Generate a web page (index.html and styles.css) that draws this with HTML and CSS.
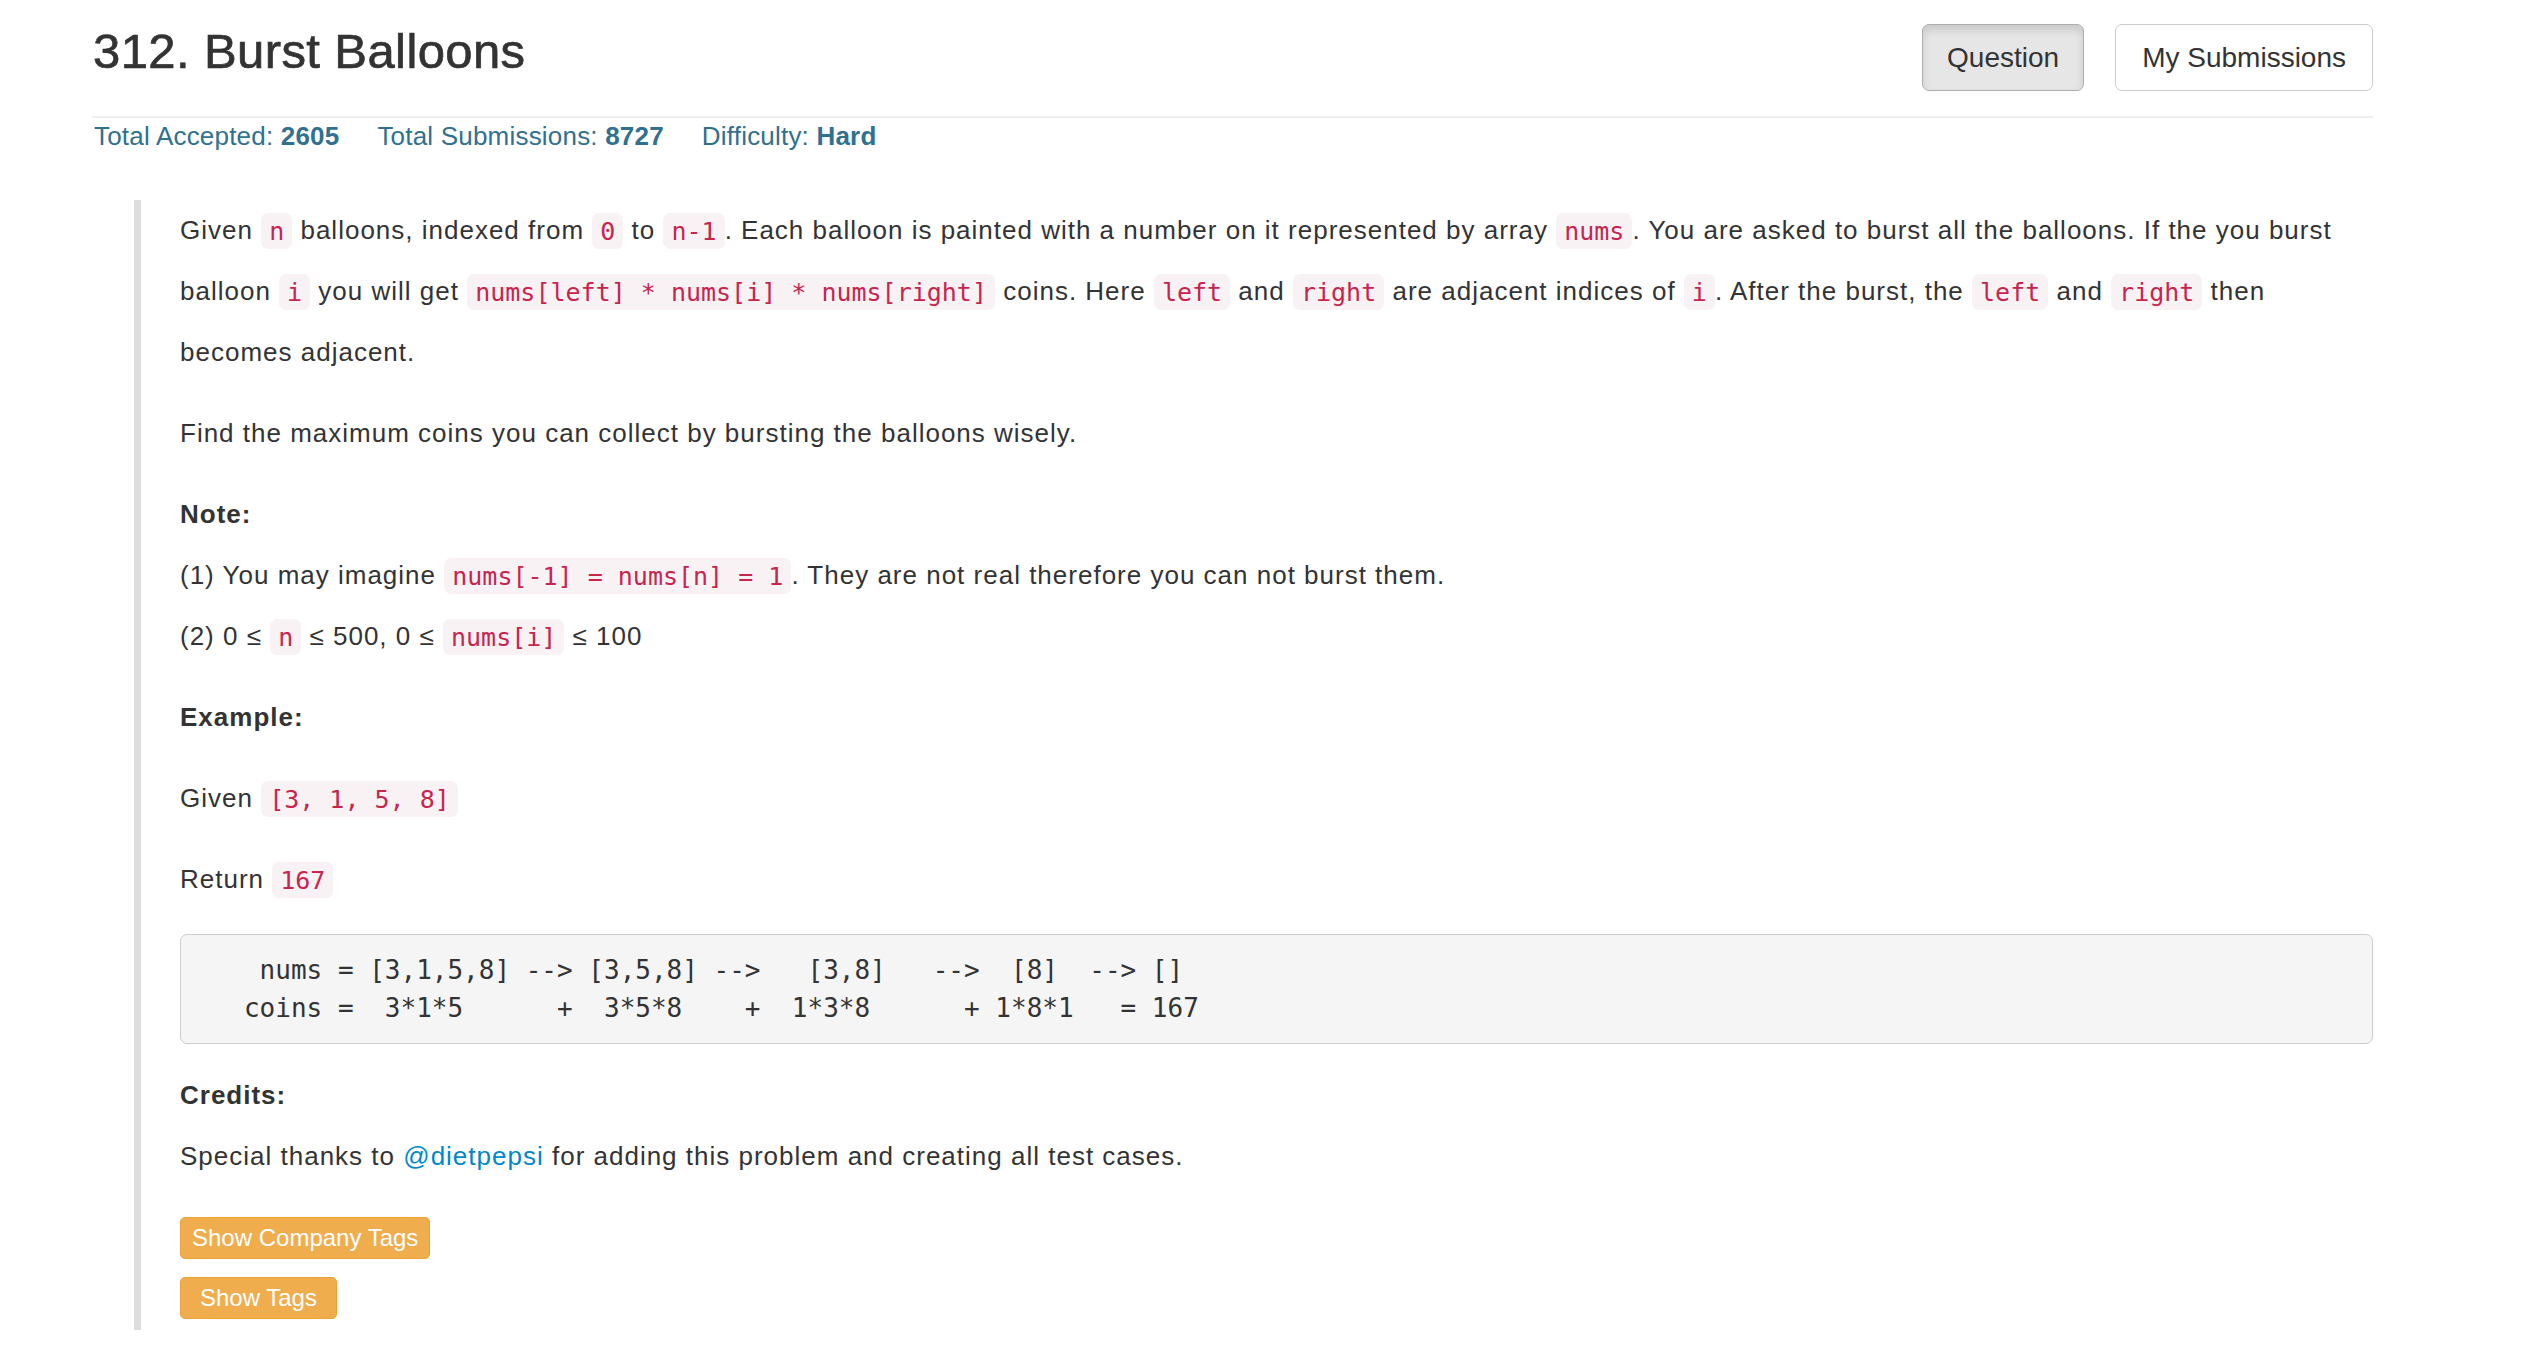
FILE: index.html
```
<!DOCTYPE html>
<html lang="en">
<head>
<meta charset="utf-8">
<title>312. Burst Balloons</title>
<link rel="stylesheet" href="styles.css">
</head>
<body>
<div class="page">
  <header class="head">
    <h3 class="title">312. Burst Balloons</h3>
    <nav class="tabs">
      <a class="tab tab-active" href="#">Question</a>
      <a class="tab" href="#">My Submissions</a>
    </nav>
  </header>
  <div class="stats">
    <span class="stat">Total Accepted: <b>2605</b></span>
    <span class="stat">Total Submissions: <b>8727</b></span>
    <span class="stat">Difficulty: <b>Hard</b></span>
  </div>
  <blockquote class="question">
    <p>Given <code>n</code> balloons, indexed from <code>0</code> to <code>n-1</code>. Each balloon is painted with a number on it represented by array <code>nums</code>. You are asked to burst all the balloons. If the you burst balloon <code>i</code> you will get <code>nums[left] * nums[i] * nums[right]</code> coins. Here <code>left</code> and <code>right</code> are adjacent indices of <code>i</code>. After the burst, the <code>left</code> and <code>right</code> then becomes adjacent.</p>
    <p>Find the maximum coins you can collect by bursting the balloons wisely.</p>
    <p><b>Note:</b><br>(1) You may imagine <code>nums[-1] = nums[n] = 1</code>. They are not real therefore you can not burst them.<br>(2) 0 ≤ <code>n</code> ≤ 500, 0 ≤ <code>nums[i]</code> ≤ 100</p>
    <p><b>Example:</b></p>
    <p>Given <code>[3, 1, 5, 8]</code></p>
    <p>Return <code>167</code></p>
    <pre class="example">    nums = [3,1,5,8] --&gt; [3,5,8] --&gt;   [3,8]   --&gt;  [8]  --&gt; []
   coins =  3*1*5      +  3*5*8    +  1*3*8      + 1*8*1   = 167</pre>
    <p><b>Credits:</b><br>Special thanks to <a class="user" href="#">@dietpepsi</a> for adding this problem and creating all test cases.</p>
    <div class="tag-buttons">
      <button class="btn-tag" type="button">Show Company Tags</button>
      <button class="btn-tag btn-tag-wide" type="button">Show Tags</button>
    </div>
  </blockquote>
</div>
</body>
</html>
```
FILE: styles.css
```
html, body {
  margin: 0;
  padding: 0;
  background: #fff;
}

body {
  font-family: "Liberation Sans", Arial, Helvetica, sans-serif;
  color: #333;
  font-size: 26px;
}

.page {
  width: 2281px;
  padding-left: 92px;
}

.head {
  display: flex;
  justify-content: space-between;
  align-items: flex-start;
  padding-top: 24px;
  padding-bottom: 25px;
  border-bottom: 2px solid #eee;
}

.title {
  margin: 0;
  font-size: 49px;
  line-height: 54px;
  font-weight: normal;
  letter-spacing: 0.4px;
  color: #333;
  -webkit-text-stroke: 0.7px #333;
  padding-left: 1px;
}

.tabs {
  display: flex;
  gap: 31px;
}

.tab {
  display: block;
  font-size: 28px;
  line-height: 41px;
  padding: 12px 26px;
  border: 1px solid #ccc;
  border-radius: 7px;
  color: #333;
  text-decoration: none;
  background: #fff;
}

.tab-active {
  background: #e6e6e6;
  border-color: #adadad;
  box-shadow: inset 0 5px 9px rgba(0, 0, 0, 0.125);
  padding-left: 24px;
  padding-right: 24px;
}

.stats {
  display: flex;
  gap: 38px;
  font-size: 26px;
  line-height: 36px;
  letter-spacing: 0.2px;
  color: #31708f;
  padding-left: 2px;
}

.stats b {
  font-weight: bold;
}

.question {
  margin: 46px 0 0 42px;
  padding: 0 0 11px 39px;
  border-left: 7px solid #ddd;
  font-size: 26px;
  line-height: 61px;
  letter-spacing: 1px;
}

.question p {
  margin: 0 0 20px;
}

.question b {
  font-weight: bold;
}

code {
  font-family: "DejaVu Sans Mono", Menlo, monospace;
  font-size: 25px;
  letter-spacing: 0;
  padding: 3.5px 8px;
  color: #c7254e;
  background: #f9f2f4;
  border-radius: 7px;
}

.example {
  margin: 24px 0 21px;
  padding: 16px;
  font-family: "DejaVu Sans Mono", Menlo, monospace;
  font-size: 26px;
  line-height: 38px;
  letter-spacing: 0;
  color: #333;
  background: #f5f5f5;
  border: 1px solid #ccc;
  border-radius: 7px;
  white-space: pre;
}

.user {
  color: #0088cc;
  text-decoration: none;
}

.tag-buttons {
  display: flex;
  flex-direction: column;
  align-items: flex-start;
  gap: 18px;
  padding-top: 10px;
}

.btn-tag {
  font-family: "Liberation Sans", Arial, Helvetica, sans-serif;
  font-size: 24px;
  line-height: 36px;
  letter-spacing: 0;
  padding: 2px 11px;
  color: #fff;
  background: #f0ad4e;
  border: 1px solid #eea236;
  border-radius: 5px;
  cursor: pointer;
}

.btn-tag-wide {
  padding-left: 19px;
  padding-right: 19px;
}
```
